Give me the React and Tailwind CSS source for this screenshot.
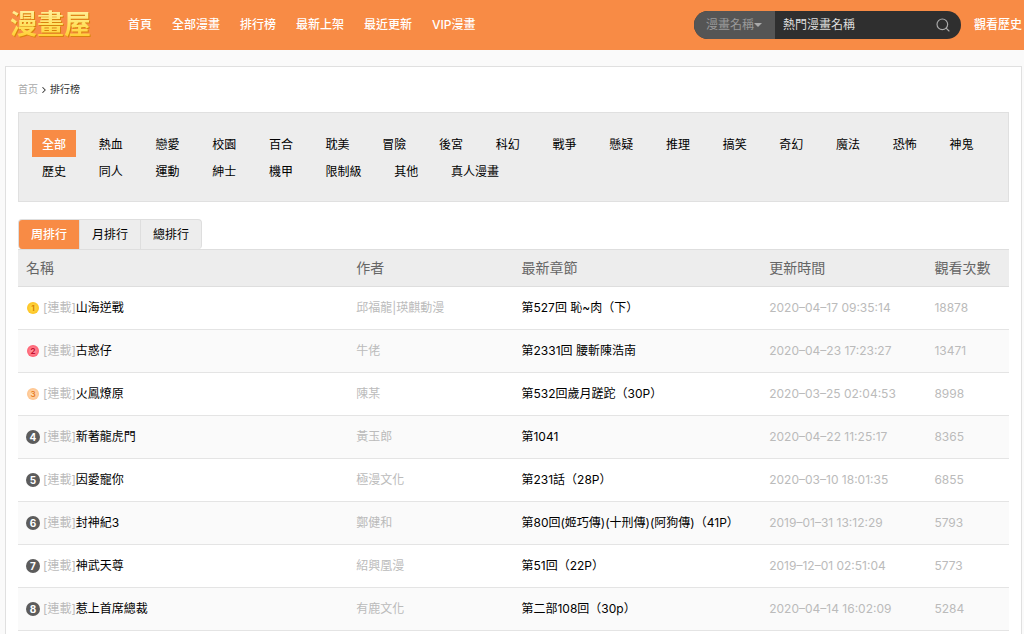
import React from "react";
import { Search, ChevronRight } from "lucide-react";

const NAV = ["首頁", "全部漫畫", "排行榜", "最新上架", "最近更新", "VIP漫畫"];

const TAGS = [
  "全部", "熱血", "戀愛", "校園", "百合", "耽美", "冒險", "後宮", "科幻", "戰爭", "懸疑", "推理", "搞笑",
  "奇幻", "魔法", "恐怖", "神鬼", "歷史", "同人", "運動", "紳士", "機甲", "限制級", "其他", "真人漫畫",
];

const TABS = ["周排行", "月排行", "總排行"];

const ROWS = [
  { name: "山海逆戰", author: "邱福龍|瑛麒動漫", chapter: "第527回 恥~肉（下）", time: "2020–04–17 09:35:14", views: 18878 },
  { name: "古惑仔", author: "牛佬", chapter: "第2331回 腰斬陳浩南", time: "2020–04–23 17:23:27", views: 13471 },
  { name: "火鳳燎原", author: "陳某", chapter: "第532回歲月蹉跎（30P）", time: "2020–03–25 02:04:53", views: 8998 },
  { name: "新著龍虎門", author: "黃玉郎", chapter: "第1041", time: "2020–04–22 11:25:17", views: 8365 },
  { name: "因愛寵你", author: "極漫文化", chapter: "第231話（28P）", time: "2020–03–10 18:01:35", views: 6855 },
  { name: "封神紀3", author: "鄭健和", chapter: "第80回(姬巧傳)(十刑傳)(阿狗傳)（41P）", time: "2019–01–31 13:12:29", views: 5793 },
  { name: "神武天尊", author: "紹興凰漫", chapter: "第51回（22P）", time: "2019–12–01 02:51:04", views: 5773 },
  { name: "惹上首席總裁", author: "有鹿文化", chapter: "第二部108回（30p）", time: "2020–04–14 16:02:09", views: 5284 },
];

// top three get a coloured medal, the rest a grey disc
const MEDALS = [
  "size-3 mx-px text-[8px] text-[#d98200] bg-radial from-[#ffe04a] to-[#fbb800]",
  "size-3 mx-px text-[8px] text-[#c4102f] bg-radial from-[#ff9aa6] to-[#fb3f5c]",
  "size-3 mx-px text-[8px] text-[#e8822c] bg-radial from-[#ffe0bd] to-[#fdb777]",
];

function Rank({ n }) {
  const look = MEDALS[n - 1] || "size-[14px] text-[10px] text-white bg-[#5c5c5c]";
  return <span className={"inline-flex shrink-0 items-center justify-center rounded-full font-[Inter] font-bold leading-none " + look}>{n}</span>;
}

function Header() {
  return (
    <header className="flex h-[50px] items-center bg-[#f88b45] pl-[10px] pr-[2px] text-white">
      <a href="#" className="mr-[37px] bg-linear-to-b from-[#fff0a0] via-[#ffe25e] to-[#ffc61a] bg-clip-text text-[27px] leading-8 font-bold text-transparent drop-shadow-[1px_1px_0_#d9820c]">漫畫屋</a>
      <nav className="flex gap-5 font-medium">
        {NAV.map((n) => <a key={n} href="#" className="whitespace-nowrap">{n}</a>)}
      </nav>
      <form className="ml-auto mr-[13px] flex h-7 overflow-hidden rounded-full bg-[#2f2f2f]">
        <div className="relative w-[81px] bg-[#555]">
          <select aria-label="搜尋類型" className="h-full w-full appearance-none pl-3 text-[#999] outline-none">
            <option>漫畫名稱</option>
            <option>作者名稱</option>
          </select>
          <svg className="pointer-events-none absolute right-[13px] top-3 h-1 w-2" viewBox="0 0 8 4"><path d="M0 0h8L4 4z" fill="#aaa" /></svg>
        </div>
        <input aria-label="搜尋" placeholder="熱門漫畫名稱" className="w-[153px] px-2 text-white outline-none placeholder:text-[#ddd]" />
        <button type="button" aria-label="搜尋" className="flex w-[33px] items-center pl-[7px] text-[#aaa]">
          <Search size={16} strokeWidth={1.75} />
        </button>
      </form>
      <a href="#" className="whitespace-nowrap font-medium">觀看歷史</a>
    </header>
  );
}

function Filters() {
  return (
    <div className="border border-[#e0e0e0] bg-[#ededed] py-[17px] pl-[13px] font-['Noto_Sans_CJK_TC',sans-serif]">
      {TAGS.map((t, i) => (
        <React.Fragment key={t}>
          <a href="#" className={"mr-[10px] inline-block px-[10px] leading-[27px] " + (i === 0 ? "bg-[#f88b45] font-medium text-white" : "")}>{t}</a>{" "}
        </React.Fragment>
      ))}
    </div>
  );
}

function Ranking() {
  return (
    <table className="w-full table-fixed text-left">
      <thead>
        <tr className="h-[37px] border-y border-[#dedede] bg-[#ededed] text-sm text-[#666]">
          <th className="w-4/12 pl-2 font-normal">名稱</th>
          <th className="w-2/12 pl-2 font-normal">作者</th>
          <th className="w-3/12 pl-2 font-normal">最新章節</th>
          <th className="w-2/12 pl-2 font-normal">更新時間</th>
          <th className="w-1/12 pl-2 font-normal">觀看次數</th>
        </tr>
      </thead>
      <tbody>
        {ROWS.map((r, i) => (
          <tr key={r.name} className="h-[43px] border-b border-[#e4e4e4] text-[#bbb] even:bg-[#fafafa]">
            <td className="pl-2">
              <div className="flex items-center">
                <Rank n={i + 1} />
                <span className="ml-[3px]">[連載]</span>
                <a href="#" className="text-black">{r.name}</a>
              </div>
            </td>
            <td className="pl-2">{r.author}</td>
            <td className="whitespace-nowrap pl-2"><a href="#" className="text-black">{r.chapter}</a></td>
            <td className="whitespace-nowrap pl-2">{r.time}</td>
            <td className="pl-2">{r.views}</td>
          </tr>
        ))}
      </tbody>
    </table>
  );
}

export default function App() {
  return (
    <div className="flex min-h-screen flex-col bg-[#fafafa] font-[Inter,'Noto_Sans_CJK_TC',sans-serif] text-xs text-black">
      <Header />
      <main className="mt-4 ml-[5px] mr-[2px] flex-1 border border-b-0 border-[#e0e0e0] bg-white px-3">
        <div className="flex h-[45px] items-center gap-px text-[10px] text-[#333]">
          <a href="#" className="text-[#aaa]">首页</a>
          <ChevronRight size={10} strokeWidth={2.5} />
          <span>排行榜</span>
        </div>
        <Filters />
        <div className="mt-[17px] flex">
          <div className="flex overflow-hidden rounded border border-b-0 border-[#dedede] bg-[#ededed]">
            {TABS.map((t, i) => (
              <button key={t} type="button" className={"h-[29px] border-r border-[#dedede] px-3 last:border-r-0 " + (i === 0 ? "bg-[#f88b45] font-medium text-white" : "")}>{t}</button>
            ))}
          </div>
        </div>
        <Ranking />
      </main>
    </div>
  );
}
